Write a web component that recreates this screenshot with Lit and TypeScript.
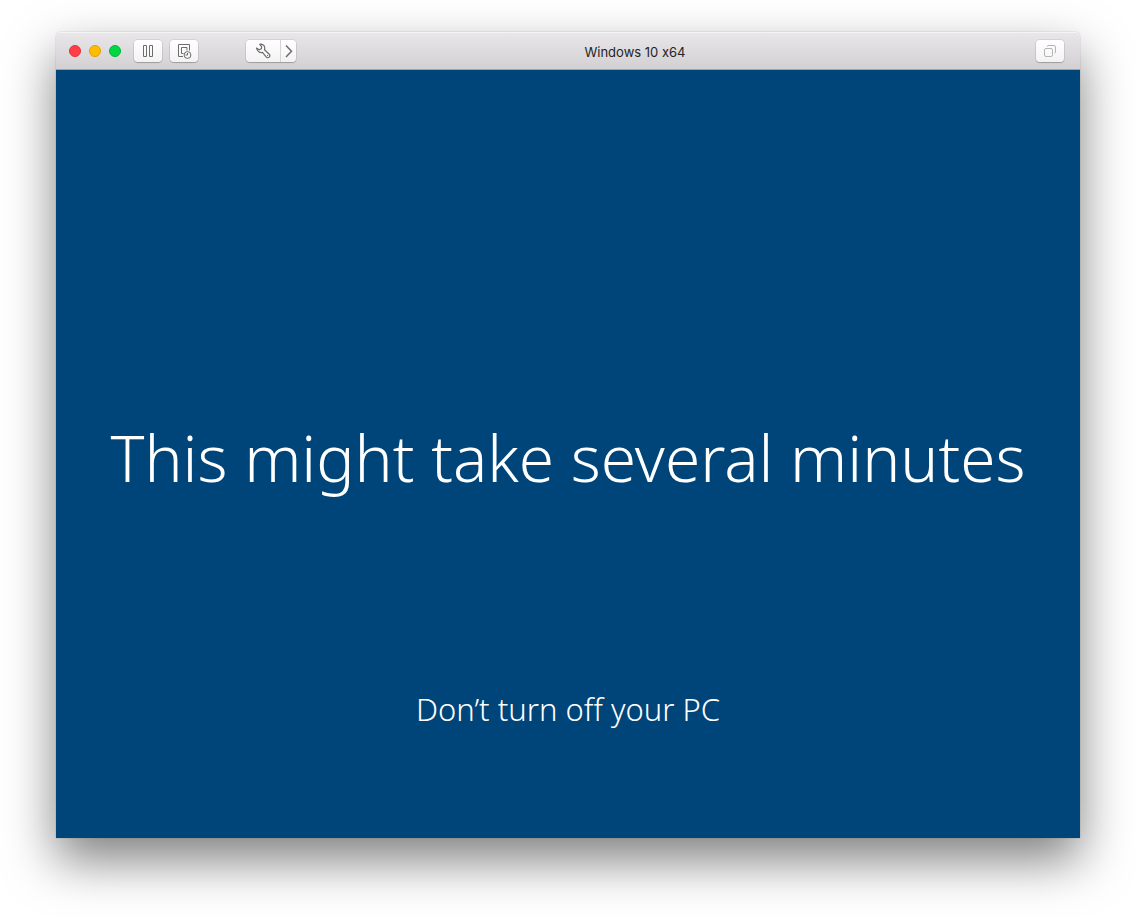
import { LitElement, html, css } from "lit";
import { customElement, property } from "lit/decorators.js";

@customElement("vm-toolbar")
class VmToolbar extends LitElement {
  @property() heading = "";

  static styles = css`
    :host {
      display: block;
    }
    .bar {
      box-sizing: border-box;
      display: flex;
      align-items: center;
      height: 38px;
      padding: 0 15px 0 13px;
      border-bottom: 1px solid #a5a2a5;
      border-radius: 5px 5px 0 0;
      background: linear-gradient(#e9e7e9, #d2d0d2);
      box-shadow: inset 0 1px 0 #f5f4f5;
    }
    button {
      box-sizing: border-box;
      margin: 0;
      padding: 0;
      border: 0;
      font: inherit;
    }
    .lights {
      display: flex;
      gap: 8px;
      margin-right: 13px;
    }
    .light {
      width: 12px;
      height: 12px;
      border: 1px solid;
      border-radius: 50%;
    }
    .close {
      background: #ff3e47;
      border-color: #e2323b;
    }
    .minimize {
      background: #ffbd00;
      border-color: #e0a100;
    }
    .zoom {
      background: #00d742;
      border-color: #00b934;
    }
    .tool,
    .group {
      display: flex;
      height: 22px;
      border-radius: 4px;
      background: linear-gradient(#ffffff, #f3f3f3);
      box-shadow: 0 0 0 1px rgba(0, 0, 0, 0.07), 0 1px 1px rgba(0, 0, 0, 0.2);
    }
    .tool {
      width: 28px;
      margin-right: 8px;
      color: #6c6c6c;
    }
    .group {
      margin-left: 40px;
      color: #6c6c6c;
    }
    .group button {
      background: none;
      color: inherit;
    }
    .settings {
      width: 34px;
    }
    .more {
      width: 16px;
      border-left: 1px solid #d4d4d4;
    }
    .windows {
      margin-right: 1px;
      color: #b5b5b5;
    }
    svg {
      display: block;
      margin: auto;
      fill: none;
      stroke: currentColor;
    }
    .heading {
      flex: 1;
      margin: 0;
      padding: 2px 62px 0 0;
      text-align: center;
      font-size: 13px;
      font-weight: 400;
      font-feature-settings: "calt" 0;
      line-height: 16px;
      color: #242424;
    }
  `;

  render() {
    return html`
      <header class="bar">
        <div class="lights">
          <button class="light close" aria-label="Close"></button>
          <button class="light minimize" aria-label="Minimize"></button>
          <button class="light zoom" aria-label="Zoom"></button>
        </div>
        <button class="tool" aria-label="Pause">
          <svg width="12" height="14" viewBox="0 0 12 14">
            <path d="M1.5 1.5h3v11h-3zM7.5 1.5h3v11h-3z" />
          </svg>
        </button>
        <button class="tool" aria-label="Snapshots">
          <svg width="16" height="16" viewBox="0 0 16 16">
            <path d="M7 13.500H2.500v-12h11v6M7.500 10.500h-2v-6h5.500v3" />
            <circle cx="11.500" cy="12" r="3.400" />
            <path d="M11.500 10v2h-2" />
          </svg>
        </button>
        <div class="group">
          <button class="settings" aria-label="Settings">
            <svg width="16" height="16" viewBox="0 0 16 16">
              <path
                stroke-width="1.200"
                stroke-linejoin="round"
                d="M1.500 5 4.200 6.800 6.400 5.700 6.600 3.600 4.800 1.300C7 .8 9.500 2.200 9.700 4.500c.1.900 0 1.500-.2 2.200L14 11c1 1 1 2.300.2 3.100s-2.200.8-3.100-.2L7.500 9.400C5 10 2 8.500 1.500 5z"
              />
              <path d="M12 12.500h1" />
            </svg>
          </button>
          <button class="more" aria-label="Show toolbar">
            <svg width="11" height="14" viewBox="0 0 11 14">
              <path stroke-width="1.500" d="m3 1.500 5.500 5.800L3 13" />
            </svg>
          </button>
        </div>
        <h1 class="heading">${this.heading}</h1>
        <button class="tool windows" aria-label="Unity view">
          <svg width="14" height="14" viewBox="0 0 14 14">
            <rect x="1.500" y="4.500" width="8" height="8" rx="1.500" />
            <path d="M4.500 2.500v-.5q0-.5.5-.5h6q1.500 0 1.500 1.500v5q0 1-1 1" />
          </svg>
        </button>
      </header>
    `;
  }
}

@customElement("update-screen")
class UpdateScreen extends LitElement {
  @property() message = "";
  @property() note = "";

  static styles = css`
    :host {
      display: grid;
      grid-template-rows: 1fr auto 1fr;
      box-sizing: border-box;
      padding-top: 8px;
      background: #004579;
      color: #fff;
      text-align: center;
      font-family: "Noto Sans", "Open Sans", sans-serif;
      font-weight: 300;
    }
    .message,
    .note {
      margin: 0;
    }
    .message {
      grid-row: 2;
      font-size: 64px;
      line-height: 92px;
    }
    .note {
      grid-row: 3;
      align-self: end;
      padding-bottom: 106px;
      font-size: 31px;
      line-height: 46px;
    }
  `;

  render() {
    return html`
      <p class="message">${this.message}</p>
      <p class="note">${this.note}</p>
    `;
  }
}

@customElement("app-root")
class AppRoot extends LitElement {
  static styles = css`
    :host {
      display: flex;
      box-sizing: border-box;
      min-height: 100vh;
      padding: 32px 56px 80px;
      background: #fff;
      font-family: Inter, "Liberation Sans", sans-serif;
    }
    .window {
      flex: 1;
      display: flex;
      flex-direction: column;
      border-radius: 5px 5px 0 0;
      box-shadow: 0 0 1px rgba(0, 0, 0, 0.5), 0 22px 50px rgba(0, 0, 0, 0.5);
    }
    .screen {
      flex: 1;
    }
  `;

  render() {
    return html`
      <main class="window">
        <vm-toolbar heading="Windows 10 x64"></vm-toolbar>
        <update-screen
          class="screen"
          message="This might take several minutes"
          note="Don’t turn off your PC"
        ></update-screen>
      </main>
    `;
  }
}
